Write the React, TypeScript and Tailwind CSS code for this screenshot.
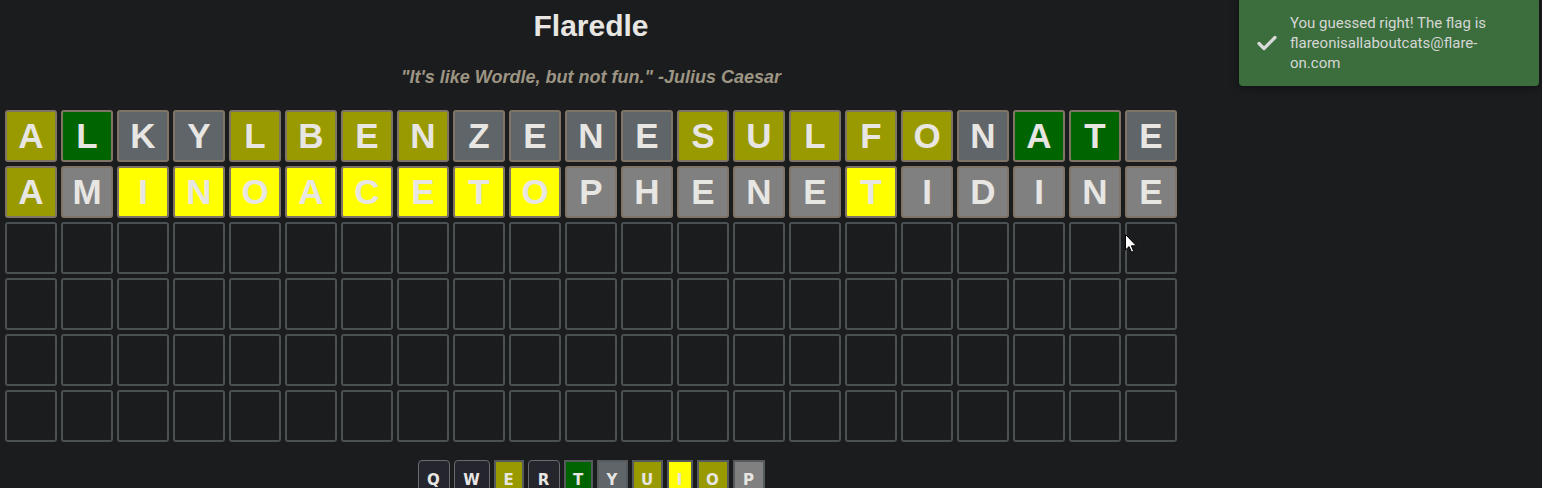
import React from "react";

type Tone = "olive" | "green" | "gray" | "gray2" | "yellow";

const toneClass: Record<Tone, string> = {
  olive: "bg-[#999900]",
  green: "bg-[#006400]",
  gray: "bg-[#5f6568]",
  gray2: "bg-[#808080]",
  yellow: "bg-[#ffff00]",
};

const O: Tone = "olive";
const G: Tone = "green";
const X: Tone = "gray";
const Z: Tone = "gray2";
const Y: Tone = "yellow";

const guesses: { word: string; tones: Tone[] }[] = [
  {
    word: "ALKYLBENZENESULFONATE",
    tones: [O, G, X, X, O, O, O, O, X, X, X, X, O, O, O, O, O, X, G, G, X],
  },
  {
    word: "AMINOACETOPHENETIDINE",
    tones: [O, Z, Y, Y, Y, Y, Y, Y, Y, Y, Z, Z, Z, Z, Z, Y, Z, Z, Z, Z, Z],
  },
];

const keys: { k: string; w: string; tone?: Tone }[] = [
  { k: "Q", w: "w-[32px]" },
  { k: "W", w: "w-[36px]" },
  { k: "E", w: "w-[30px]", tone: O },
  { k: "R", w: "w-[32px]" },
  { k: "T", w: "w-[29px]", tone: G },
  { k: "Y", w: "w-[31px]", tone: X },
  { k: "U", w: "w-[31px]", tone: O },
  { k: "I", w: "w-[26px]", tone: Y },
  { k: "O", w: "w-[32px]", tone: O },
  { k: "P", w: "w-[32px]", tone: Z },
];

function Tile({ letter, tone }: { letter?: string; tone?: Tone }) {
  if (!tone) {
    return <div className="h-[52px] w-[52px] rounded-[3px] border-2 border-[#4b5053]" />;
  }
  return (
    <div
      className={`flex h-[52px] w-[52px] items-center justify-center rounded-[3px] border-2 border-[#7f7465] text-[35px] font-bold text-[#e8e6e3] ${toneClass[tone]}`}
    >
      {letter}
    </div>
  );
}

export default function App() {
  const emptyRows = 4;
  return (
    <div
      className="relative h-[488px] w-full overflow-hidden bg-[#1b1c1e]"
      style={{ fontFamily: '"Liberation Sans", Arial, sans-serif' }}
    >
      <div className="flex w-[1182px] flex-col items-center px-[5px] pt-[8px]">
        <h1 className="text-[30px] font-bold leading-[36px] text-[#e8e6e3]">Flaredle</h1>
        <p className="mt-[21px] text-[18px] font-bold italic leading-[24px] text-[#9d9583]">
          "It's like Wordle, but not fun." -Julius Caesar
        </p>

        <div className="mt-[21px] flex flex-col gap-[4px]">
          {guesses.map((g, r) => (
            <div key={r} className="flex gap-[4px]">
              {g.word.split("").map((c, i) => (
                <Tile key={i} letter={c} tone={g.tones[i]} />
              ))}
            </div>
          ))}
          {Array.from({ length: emptyRows }).map((_, r) => (
            <div key={"e" + r} className="flex gap-[4px]">
              {Array.from({ length: 21 }).map((__, i) => (
                <Tile key={i} />
              ))}
            </div>
          ))}
        </div>

        <div
          className="mt-[18px] flex gap-[4px] text-[15px] font-bold text-[#e8e6e3]"
          style={{ fontFamily: '"DejaVu Sans", Verdana, sans-serif' }}
        >
          {keys.map((key) =>
            key.tone ? (
              <div
                key={key.k}
                className={`flex h-[40px] ${key.w} items-center justify-center border-2 border-[#555a5d] ${toneClass[key.tone]}`}
              >
                {key.k}
              </div>
            ) : (
              <div
                key={key.k}
                className={`flex h-[40px] ${key.w} items-center justify-center rounded-[4px] border border-[#6a6a70] bg-[#25252e]`}
              >
                {key.k}
              </div>
            )
          )}
        </div>
      </div>

      {/* toast */}
      <div className="absolute right-[3px] top-[-4px] flex h-[90px] w-[300px] items-center gap-[11px] rounded-[4px] bg-[#3b6e3c] pl-[16px] pr-[10px] pt-[4px] shadow-[0_1px_10px_rgba(0,0,0,0.45)]">
        <svg width="24" height="24" viewBox="0 0 24 24" className="shrink-0">
          <path
            d="M4 12.5l5 5L20 6.5"
            fill="none"
            stroke="#d9d9d9"
            strokeWidth="3.2"
            strokeLinecap="round"
            strokeLinejoin="round"
          />
        </svg>
        <p
          className="w-[222px] break-words text-[15px] leading-[20px] text-[#d6d6d6]"
          style={{ fontFamily: "Roboto, Arial, sans-serif" }}
        >
          You guessed right! The flag is flareonisallaboutcats@flare-on.com
        </p>
      </div>

      {/* mouse pointer */}
      <svg className="absolute left-[1125px] top-[234px]" width="12" height="19" viewBox="0 0 12 19">
        <path d="M0.5 0.5v15.5l3.6-3.4 2.4 5.6 2.2-1-2.3-5.4h5z" fill="#fff" stroke="#000" strokeWidth="1" />
      </svg>
    </div>
  );
}
